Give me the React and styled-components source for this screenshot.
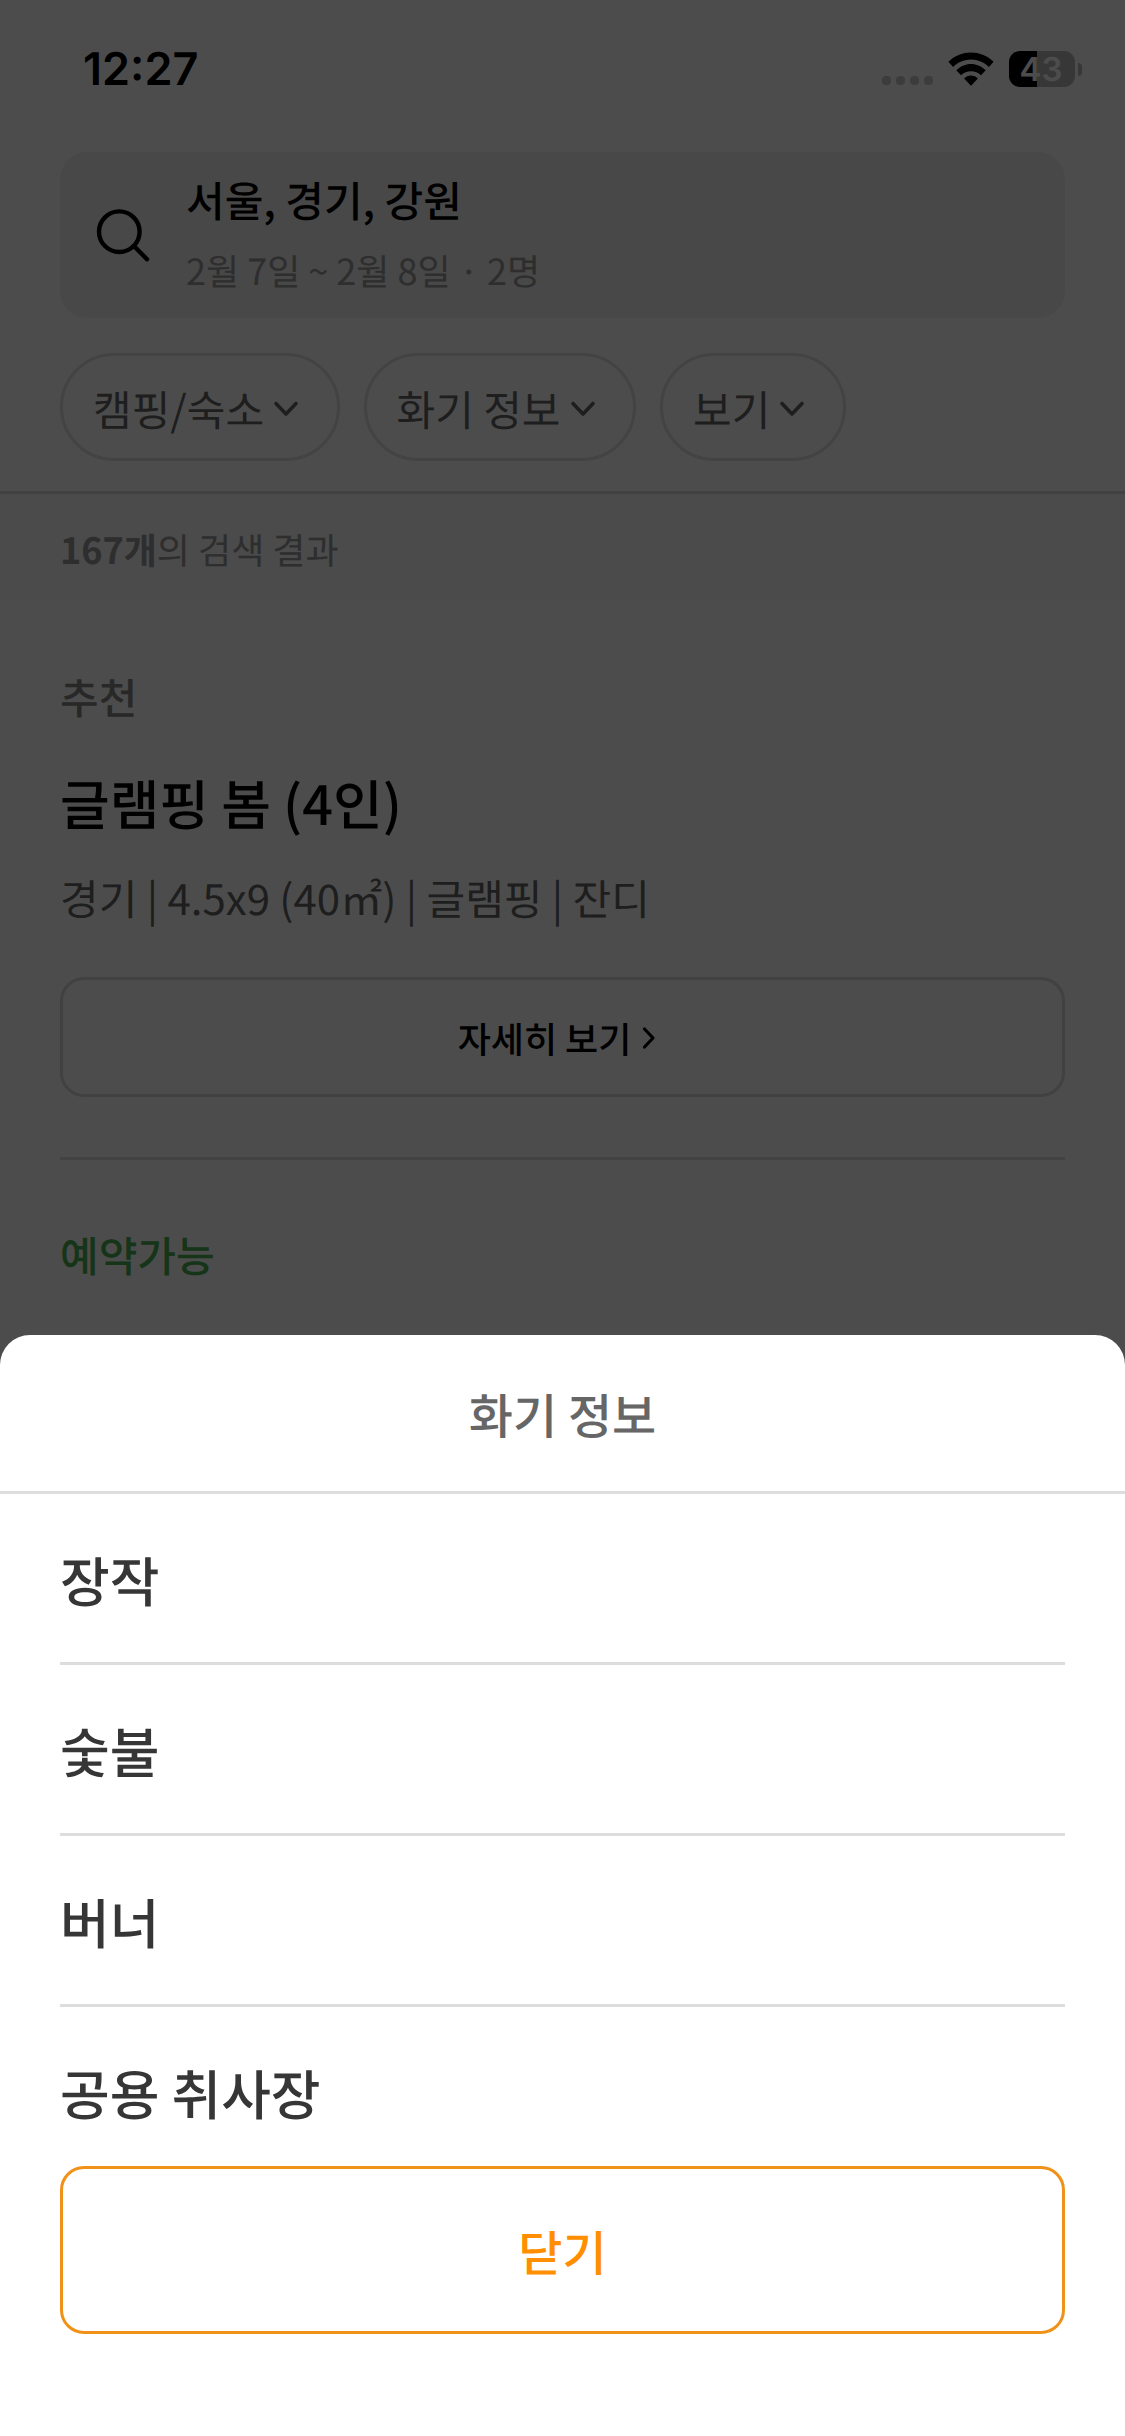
import React from "react";
import styled, { createGlobalStyle } from "styled-components";

const Global = createGlobalStyle`
  * { box-sizing: border-box; }
  html, body { margin: 0; padding: 0; }
  body {
    background: #fff;
    font-family: "Noto Sans CJK KR", "Noto Sans", sans-serif;
    color: #000;
    text-rendering: geometricPrecision;
  }
  button {
    font-family: inherit;
    text-rendering: inherit;
    cursor: pointer;
    margin: 0;
    padding: 0;
  }
`;

const Screen = styled.div`
  position: relative;
  width: 1125px;
  height: 2436px;
  overflow: hidden;
  background: #fff;
`;

const StatusBar = styled.div`
  display: flex;
  justify-content: space-between;
  height: 152px;
  padding: 0 43px 0 83px;
`;

const Clock = styled.div`
  height: 138px;
  line-height: 138px;
  font-family: Inter, sans-serif;
  font-size: 45px;
  font-weight: 600;
`;

const StatusIcons = styled.div`
  display: flex;
  align-items: center;
  height: 138px;
`;

const SignalDots = styled.div`
  display: flex;
  gap: 5px;
  margin: 23px 15px 0 0;
`;

const SignalDot = styled.span`
  width: 9px;
  height: 9px;
  border-radius: 4px;
  background: #c9c9c9;
`;

const WifiIcon = styled.svg`
  display: block;
  width: 46px;
  height: 34px;
  margin-right: 15px;
`;

const Battery = styled.div`
  display: flex;
  align-items: center;
  justify-content: center;
  width: 66px;
  height: 36px;
  padding-right: 2px;
  border-radius: 11px;
  background: linear-gradient(to right, #000 28px, #b8b8b8 28px);
  color: #fff;
  font-family: Inter, sans-serif;
  font-size: 33px;
  font-weight: 600;
  line-height: 36px;
`;

const BatteryCap = styled.span`
  width: 4px;
  height: 13px;
  margin-left: 3px;
  border-radius: 0 4px 4px 0;
  background: #b8b8b8;
`;

const SearchBox = styled.div`
  display: flex;
  align-items: center;
  height: 166px;
  margin: 0 60px;
  padding-left: 35px;
  border-radius: 27px;
  background: #f0f0f0;
`;

const SearchGlyph = styled.svg`
  display: block;
  width: 56px;
  height: 56px;
  margin-right: 35px;
`;

const SearchText = styled.div`
  display: flex;
  flex-direction: column;
  height: 141px;
`;

const Region = styled.div`
  font-size: 42px;
  font-weight: 500;
  line-height: 70px;
`;

const Period = styled.div`
  font-size: 36px;
  line-height: 70px;
  color: #999;
`;

const FilterBar = styled.div`
  display: flex;
  gap: 24px;
  height: 176px;
  padding: 35px 60px 0;
  border-bottom: 3px solid #ddd;
`;

const Chip = styled.button`
  display: flex;
  align-items: center;
  height: 108px;
  padding: 3px 36.5px 0 30px;
  border: 3px solid #e0e0e0;
  border-radius: 54px;
  background: #fff;
  color: #666;
  font-size: 42px;
  line-height: 60px;
`;

const ChipArrow = styled.svg`
  display: block;
  width: 28px;
  height: 20px;
  margin: 0 0 0 8px;
`;

const ResultCount = styled.div`
  height: 106px;
  padding: 2px 60px 0;
  background: #fafafa;
  color: #999;
  font-size: 36px;
  line-height: 106px;

  b { font-weight: 700; }
`;

const Card = styled.section`
  display: flex;
  flex-direction: column;
  margin: 0 60px;
`;

const Tag = styled.div`
  margin-top: ${(p) => p.$top}px;
  color: ${(p) => p.$color};
  font-size: 42px;
  font-weight: 500;
  line-height: 60px;
`;

const SiteName = styled.h2`
  margin: 36px 0 0;
  font-size: 54px;
  font-weight: 500;
  line-height: 78px;
`;

const SiteMeta = styled.div`
  margin-top: 27px;
  color: #666;
  font-size: 42px;
  line-height: 60px;
`;

const DetailButton = styled.button`
  display: flex;
  align-items: center;
  justify-content: center;
  height: 120px;
  margin-top: 49px;
  padding: 2px 9px 0 0;
  border: 3px solid #d9d9d9;
  border-radius: 24px;
  background: #fff;
  color: #000;
  font-size: 36px;
  font-weight: 500;
  line-height: 54px;
`;

const DetailArrow = styled.svg`
  display: block;
  width: 16px;
  height: 26px;
  margin: 0 0 0 11px;
`;

const Divider = styled.hr`
  width: 100%;
  height: 3px;
  margin: 60px 0 0;
  border: 0;
  background: #ddd;
`;

const Backdrop = styled.div`
  position: absolute;
  inset: 0;
  display: flex;
  flex-direction: column;
  justify-content: flex-end;
  background: rgba(0, 0, 0, 0.7);
`;

const Sheet = styled.div`
  display: flex;
  flex-direction: column;
  height: 1101px;
  border-radius: 30px 30px 0 0;
  background: #fff;
`;

const SheetTitle = styled.div`
  height: 159px;
  border-bottom: 3px solid #ddd;
  color: #666;
  font-size: 48px;
  font-weight: 500;
  line-height: 156px;
  text-align: center;
`;

const OptionList = styled.ul`
  height: 672px;
  margin: 0;
  padding: 0 60px;
  overflow: hidden;
  list-style: none;
`;

const Option = styled.li`
  height: 171px;
  border-bottom: 3px solid #ddd;
  color: #363636;
  font-size: 54px;
  font-weight: 500;
  line-height: 170px;
`;

const CloseButton = styled.button`
  height: 168px;
  margin: 0 60px;
  border: 3px solid #f0921a;
  border-radius: 24px;
  background: #fff;
  color: #ff8f00;
  font-size: 48px;
  font-weight: 500;
  line-height: 162px;
`;

const filters = ["캠핑/숙소", "화기 정보", "보기"];
const options = ["장작", "숯불", "버너", "공용 취사장"];

export default function App() {
  return (
    <>
      <Global />
      <Screen>
        <StatusBar>
          <Clock>12:27</Clock>
          <StatusIcons>
            <SignalDots>
              {[0, 1, 2, 3].map((i) => (
                <SignalDot key={i} />
              ))}
            </SignalDots>
            <WifiIcon viewBox="0 0 46 34">
              <path d="M23 0.5C31.600 0.5 39.700 3.900 45.600 9.800L40.900 15C36.200 10.300 29.800 7.500 23 7.500S9.800 10.300 5.100 15L0.400 9.800C6.300 3.900 14.400 0.500 23 0.500Z" />
              <path d="M23 12C28.600 12 33.800 14.300 37.700 18.300L33 23.300C30.300 20.700 26.800 19.200 23 19.200S15.700 20.700 13 23.300L8.300 18.300C12.200 14.300 17.400 12 23 12Z" />
              <path d="M23 23.500C25.700 23.500 28.100 24.600 29.900 26.400L23 33.700L16.100 26.400C17.900 24.600 20.300 23.500 23 23.500Z" />
            </WifiIcon>
            <Battery>43</Battery>
            <BatteryCap />
          </StatusIcons>
        </StatusBar>

        <SearchBox>
          <SearchGlyph viewBox="0 0 56 56" fill="none" stroke="#000" strokeWidth="4.400" strokeLinecap="round">
            <circle cx="24.300" cy="24.700" r="20.300" />
            <path d="M39 39L52 52.300" />
          </SearchGlyph>
          <SearchText>
            <Region>서울, 경기, 강원</Region>
            <Period>2월 7일 ~ 2월 8일 · 2명</Period>
          </SearchText>
        </SearchBox>

        <FilterBar>
          {filters.map((label) => (
            <Chip key={label}>
              {label}
              <ChipArrow viewBox="0 0 28 20" fill="none" stroke="#666" strokeWidth="3.600" strokeLinecap="round" strokeLinejoin="round">
                <path d="M4 4.500L14 15L24 4.500" />
              </ChipArrow>
            </Chip>
          ))}
        </FilterBar>

        <ResultCount>
          <b>167개</b>의 검색 결과
        </ResultCount>

        <Card>
          <Tag $top={67} $color="#888">추천</Tag>
          <SiteName>글램핑 봄 (4인)</SiteName>
          <SiteMeta>경기 | 4.5x9 (40㎡) | 글램핑 | 잔디</SiteMeta>
          <DetailButton>
            자세히 보기
            <DetailArrow viewBox="0 0 16 26" fill="none" stroke="#000" strokeWidth="3.200" strokeLinecap="round" strokeLinejoin="round">
              <path d="M2.500 4L11 13L2.500 22" />
            </DetailArrow>
          </DetailButton>
          <Divider />
          <Tag $top={65} $color="#4caf50">예약가능</Tag>
        </Card>

        <Backdrop>
          <Sheet>
            <SheetTitle>화기 정보</SheetTitle>
            <OptionList>
              {options.map((name) => (
                <Option key={name}>{name}</Option>
              ))}
            </OptionList>
            <CloseButton>닫기</CloseButton>
          </Sheet>
        </Backdrop>
      </Screen>
    </>
  );
}
